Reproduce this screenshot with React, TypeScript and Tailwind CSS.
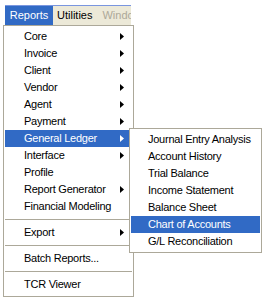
import React from "react";

const mainItems: { label: string; sub?: boolean; active?: boolean; sep?: boolean }[] = [
  { label: "Core", sub: true },
  { label: "Invoice", sub: true },
  { label: "Client", sub: true },
  { label: "Vendor", sub: true },
  { label: "Agent", sub: true },
  { label: "Payment", sub: true },
  { label: "General Ledger", sub: true, active: true },
  { label: "Interface", sub: true },
  { label: "Profile" },
  { label: "Report Generator", sub: true },
  { label: "Financial Modeling" },
  { label: "-", sep: true },
  { label: "Export", sub: true },
  { label: "-", sep: true },
  { label: "Batch Reports..." },
  { label: "-", sep: true },
  { label: "TCR Viewer" },
];

const ledgerItems = [
  "Journal Entry Analysis",
  "Account History",
  "Trial Balance",
  "Income Statement",
  "Balance Sheet",
  "Chart of Accounts",
  "G/L Reconciliation",
];

function Arrow({ light }: { light?: boolean }) {
  return (
    <svg width="4" height="7" viewBox="0 0 4 7" className="shrink-0">
      <path d="M0 0 L4 3.5 L0 7 Z" fill={light ? "#ffffff" : "#000000"} />
    </svg>
  );
}

export default function App() {
  return (
    <div className="relative h-[297px] w-[262px] overflow-hidden bg-white font-['Liberation_Sans',Arial,sans-serif] text-[11px] tracking-[-0.25px] text-black">
      <div className="ml-[5px] mt-[5px] h-px w-[126px] bg-[#7a96df]" />
      <div className="ml-[5px] flex h-[19px] w-[126px] items-center overflow-hidden whitespace-nowrap bg-[#ece9d8] tracking-normal">
        <div className="flex h-full w-[48px] shrink-0 items-center justify-center bg-[#316ac5] text-white">
          Reports
        </div>
        <div className="shrink-0 pl-[4px]">Utilities</div>
        <div className="shrink-0 pl-[10px] text-[#aca899]">Windo</div>
      </div>

      <div className="absolute left-[3px] top-[25px] h-[272px] w-[131px] border border-[#aca899] bg-white pt-[2px]">
        {mainItems.map((item, i) =>
          item.sep ? (
            <div key={i} className="flex h-[9px] items-center px-[1px]">
              <div className="h-px w-full bg-[#aca899]" />
            </div>
          ) : (
            <div
              key={i}
              className={
                "mx-[1px] flex h-[17px] items-center justify-between pl-[19px] pr-[8px] " +
                (item.active ? "bg-[#316ac5] text-white" : "")
              }
            >
              <span>{item.label}</span>
              {item.sub && <Arrow light={item.active} />}
            </div>
          )
        )}
      </div>

      <div className="absolute left-[129px] top-[128px] h-[125px] w-[133px] border border-[#aca899] bg-white pt-[2px]">
        {ledgerItems.map((label) => (
          <div
            key={label}
            className={
              "mx-[1px] flex h-[17px] items-center pl-[17px] " +
              (label === "Chart of Accounts" ? "bg-[#316ac5] text-white" : "")
            }
          >
            {label}
          </div>
        ))}
      </div>
    </div>
  );
}
